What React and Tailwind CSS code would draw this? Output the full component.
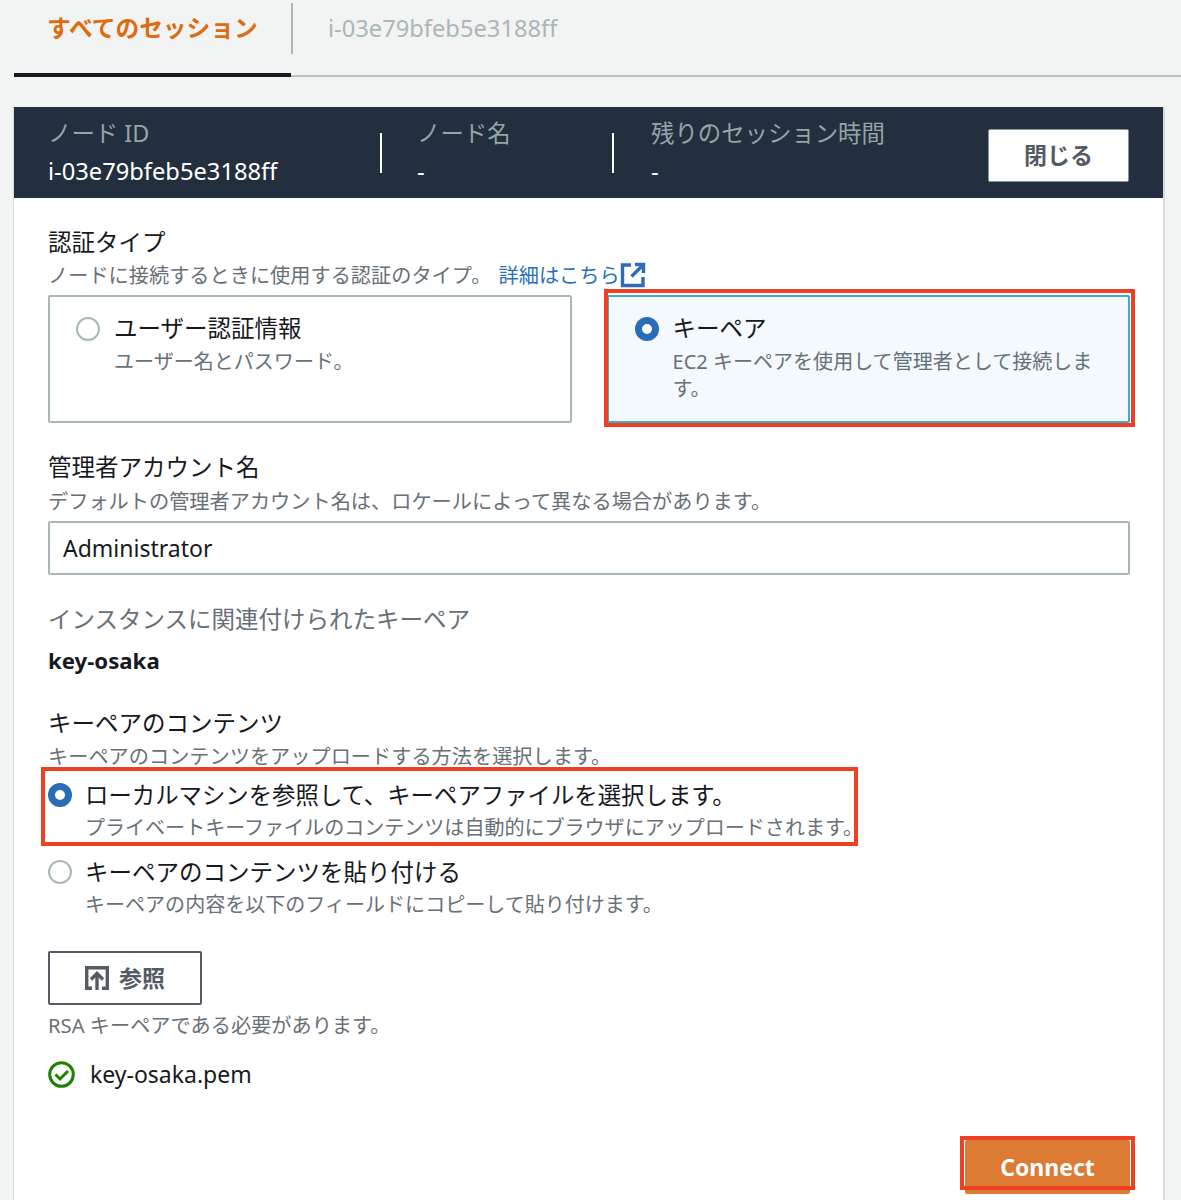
const FONT = { fontFamily: '"Noto Sans", "Noto Sans CJK JP", sans-serif' };

function Radio({ checked }) {
  if (checked) {
    return <span className="block w-[24px] h-[24px] shrink-0 rounded-full border-[7px] border-[#2b6cb8] bg-white" />;
  }
  return <span className="block w-[24px] h-[24px] shrink-0 rounded-full border-2 border-[#aab7b8] bg-white" />;
}

function ExternalIcon() {
  return (
    <svg width="26" height="26" viewBox="0 0 26 26" fill="none" stroke="#2b6cb8" strokeWidth="3.4" className="shrink-0">
      <path d="M11 3H2.500v20.500h20.500V15" />
      <path d="M15 2.500h8.500V11" />
      <path d="M23 3L11.500 14.500" />
    </svg>
  );
}

function UploadIcon() {
  return (
    <svg width="24" height="24" viewBox="0 0 24 24" fill="none" stroke="#545b64" strokeWidth="3.4" className="shrink-0">
      <path d="M7 22.300H1.700V1.700h20.600v20.600H17" />
      <path d="M12 24V8" />
      <path d="M6 13.500L12 7.500l6 6" />
    </svg>
  );
}

function CheckIcon() {
  return (
    <svg width="27" height="27" viewBox="0 0 27 27" fill="none" stroke="#1d8102" strokeWidth="3" className="shrink-0">
      <circle cx="13.5" cy="13.5" r="11.8" />
      <path d="M7.500 13.500l4.500 4.500 8-8" />
    </svg>
  );
}

function Tile({ checked, title, children }) {
  return (
    <div className={checked
      ? 'flex-1 h-[128px] flex gap-[14px] pl-[26px] pr-[30px] pt-[20px] rounded-[2px] border-2 border-[#45a9cc] bg-[#f3f9fd]'
      : 'flex-1 h-[128px] flex gap-[14px] pl-[26px] pr-[30px] pt-[20px] rounded-[2px] border-2 border-[#aab7b8] bg-white'}>
      <Radio checked={checked} />
      <div className="-mt-[5px]">
        <p className="text-[23.5px] leading-[33px] text-[#16191f]">{title}</p>
        <p className="mt-[3px] text-[20.05px] leading-[27px] text-[#687078]">{children}</p>
      </div>
    </div>
  );
}

function HeaderField({ label, value, className }) {
  return (
    <div className={className}>
      <p className="text-[23.4px] leading-[33px] text-[#95a5a6]">{label}</p>
      <p className="text-[23.7px] leading-[33px] mt-[5px] text-white">{value}</p>
    </div>
  );
}

export default function App() {
  return (
    <div style={FONT} className="relative h-[1200px] overflow-hidden bg-[#f2f3f3]">
      {/* Tabs */}
      <div className="ml-[14px] h-[77px] flex border-b-2 border-[#b6c2c3]">
        <div className="relative w-[277px] h-[77px] pl-[33px] pt-[9px] border-b-[4px] border-[#16191f]">
          <span className="text-[23.7px] leading-[38px] font-bold text-[#dd6b10]">すべてのセッション</span>
        </div>
        <div className="mt-[3px] h-[51px] w-[2px] bg-[#aab7b8]" />
        <div className="pl-[35px] pt-[9px] text-[23.7px] leading-[38px] text-[#aab7b8]">i-03e79bfeb5e3188ff</div>
      </div>

      {/* Session panel */}
      <div className="ml-[14px] mt-[30px] w-[1149px] h-[1100px] bg-white shadow-[-1px_0_0_#d5dbdb,2px_0_0_#d5dbdb]">
        <div className="h-[91px] flex items-start bg-[#232f3e] pl-[34px] pr-[34px] pt-[10px]">
          <HeaderField className="w-[332px]" label="ノード ID" value="i-03e79bfeb5e3188ff" />
          <div className="mt-[16px] h-[40px] w-[2px] bg-white" />
          <HeaderField className="ml-[35px] w-[195px]" label="ノード名" value="-" />
          <div className="mt-[16px] h-[40px] w-[2px] bg-white" />
          <HeaderField className="ml-[37px] flex-1" label="残りのセッション時間" value="-" />
          <button className="mt-[12px] w-[141px] h-[53px] rounded-[2px] border border-[#879596] bg-white text-[23px] font-bold text-[#545b64]">閉じる</button>
        </div>

        <div className="pl-[34px] pr-[33px] pt-[28px]">
          <p className="text-[23.5px] leading-[33px] text-[#16191f]">認証タイプ</p>
          <p className="text-[20.2px] leading-[32px] text-[#687078] flex items-center">
            ノードに接続するときに使用する認証のタイプ。
            <span className="ml-[7px] text-[#2870bd]">詳細はこちら</span>
            <span><ExternalIcon /></span>
          </p>
          <div className="mt-[4px] flex gap-[35px]">
            <Tile title="ユーザー認証情報">ユーザー名とパスワード。</Tile>
            <Tile checked title="キーペア">EC2 キーペアを使用して管理者として接続します。</Tile>
          </div>

          <p className="mt-[28px] text-[23.5px] leading-[33px] text-[#16191f]">管理者アカウント名</p>
          <p className="mt-[1px] text-[20.2px] leading-[32px] text-[#687078]">デフォルトの管理者アカウント名は、ロケールによって異なる場合があります。</p>
          <div className="mt-[4px] h-[54px] pl-[13px] flex items-center rounded-[2px] border-2 border-[#aab7b8] text-[23px] text-[#16191f]">Administrator</div>

          <p className="mt-[28px] text-[23.5px] leading-[33px] text-[#687078]">インスタンスに関連付けられたキーペア</p>
          <p className="mt-[8px] text-[22.2px] leading-[33px] font-bold text-[#16191f]">key-osaka</p>

          <p className="mt-[30px] text-[23.5px] leading-[33px] text-[#16191f]">キーペアのコンテンツ</p>
          <p className="text-[20.2px] leading-[32px] text-[#687078]">キーペアのコンテンツをアップロードする方法を選択します。</p>

          <div className="mt-[7px] flex gap-[13px]">
            <div className="pt-[4px]"><Radio checked /></div>
            <div>
              <p className="text-[23.4px] leading-[33px] text-[#16191f]">ローカルマシンを参照して、キーペアファイルを選択します。</p>
              <p className="text-[20.05px] leading-[32px] text-[#687078] whitespace-nowrap">プライベートキーファイルのコンテンツは自動的にブラウザにアップロードされます。</p>
            </div>
          </div>
          <div className="mt-[12px] flex gap-[13px]">
            <div className="pt-[4px]"><Radio /></div>
            <div>
              <p className="text-[23.5px] leading-[33px] text-[#16191f]">キーペアのコンテンツを貼り付ける</p>
              <p className="text-[20.05px] leading-[32px] text-[#687078]">キーペアの内容を以下のフィールドにコピーして貼り付けます。</p>
            </div>
          </div>

          <button className="mt-[30px] w-[154px] h-[54px] flex items-center justify-center gap-[10px] rounded-[2px] border-2 border-[#545b64] bg-white text-[23px] font-bold text-[#545b64]">
            <UploadIcon />
            参照
          </button>
          <p className="mt-[4px] text-[20.2px] leading-[32px] text-[#687078]">RSA キーペアである必要があります。</p>
          <div className="mt-[17px] flex items-center gap-[15px] text-[23px] leading-[33px] text-[#16191f]">
            <CheckIcon />
            key-osaka.pem
          </div>

          <div className="mt-[49px] flex justify-end">
            <button className="w-[165px] h-[54px] rounded-[2px] bg-[#dd7a33] text-[23px] font-bold text-white">Connect</button>
          </div>
        </div>
      </div>

      {/* Red annotation boxes */}
      <div className="absolute left-[604px] top-[289px] w-[531px] h-[138px] border-[4px] border-[#ee4022]" />
      <div className="absolute left-[41px] top-[767px] w-[817px] h-[79px] border-[4px] border-[#ee4022]" />
      <div className="absolute left-[960px] top-[1136px] w-[175px] h-[54px] border-[4px] border-[#ee4022]" />
    </div>
  );
}
